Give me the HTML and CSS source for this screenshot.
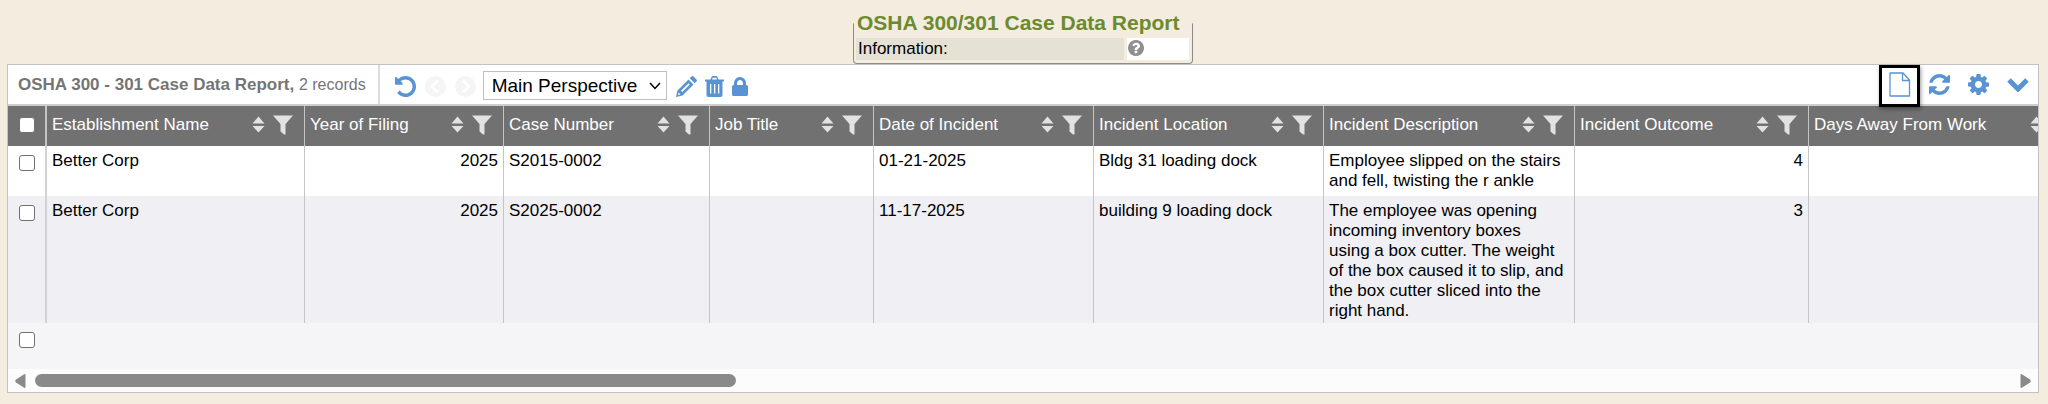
FILE: index.html
```
<!DOCTYPE html>
<html lang="en">
<head>
<meta charset="utf-8">
<title>OSHA 300/301 Case Data Report</title>
<link rel="stylesheet" href="styles.css">
</head>
<body>
<svg class="sprite" aria-hidden="true">
  <symbol id="sort" viewBox="0 0 13 18"><path d="M0.500 7.500 6.500 0.500l6 7zM0.500 10h12l-6 6.500z"/></symbol>
  <symbol id="filter" viewBox="0 0 20 20"><path d="M0 0.500h20L12.500 9v10.500h-1.500L7.500 16.500V9z"/></symbol>
  <symbol id="undo" viewBox="128 128 1536 1536"><path d="M1664 896q0 156-61 298t-164 245-245 164-298 61q-172 0-327-72.500t-264-204.500q-7-10-6.500-22.500t8.500-20.500l137-138q10-9 25-9 16 2 23 12 73 95 179 147t225 52q104 0 198.500-40.500t163.500-109.500 109.500-163.500 40.500-198.500-40.500-198.500-109.500-163.500-163.500-109.500-198.500-40.500q-98 0-188 35.500t-160 101.500l137 138q31 30 14 69-17 40-59 40h-448q-26 0-45-19t-19-45v-448q0-42 40-59 39-17 69 14l130 129q107-101 244.500-156.500t284.500-55.500q156 0 298 61t245 164 164 245 61 298z"/></symbol>
  <symbol id="prev" viewBox="0 0 21 21"><circle cx="10.500" cy="10.500" r="10.500"/><path d="M13 4.500 7 10.500l6 6" fill="none" stroke="#fff" stroke-width="3"/></symbol>
  <symbol id="next" viewBox="0 0 21 21"><circle cx="10.500" cy="10.500" r="10.500"/><path d="m8 4.500 6 6-6 6" fill="none" stroke="#fff" stroke-width="3"/></symbol>
  <symbol id="pencil" viewBox="0 0 21 21"><path fill-rule="evenodd" d="M12.500 3.500 17.500 8.500 6.500 19.500 0 21 1.300 14.700zM5 14.800l1.200 1.200 7.600-7.600-1.200-1.200zM2.500 16.500l-.5 2.500 2.500-.5zM13.700 2.300l1.700-1.700q1.100-1.100 2.200 0l2.800 2.800q1.100 1.100 0 2.200l-1.700 1.700z"/></symbol>
  <symbol id="trash" viewBox="0 0 19 21"><path fill-rule="evenodd" d="M0 3.500h5.500l1-2.500q.4-1 1.500-1h3q1.100 0 1.500 1l1 2.500H19V5.500h-1.500V19q0 2-2 2h-12q-2 0-2-2V5.500H0zM7 3.500h5l-.7-1.800H7.700zM5 8v9.500h1.300V8zm4 0v9.500h1.300V8zm4 0v9.500h1.300V8z"/></symbol>
  <symbol id="lock" viewBox="0 0 16 19"><path fill-rule="evenodd" d="M2 8V6q0-2.500 1.800-4.300T8 0t4.200 1.700T14 6v2h.5Q16 8 16 9.500v8q0 1.500-1.500 1.500h-13Q0 19 0 17.500v-8Q0 8 1.500 8zM5 8h6V6q0-1.200-.9-2.100T8 3t-2.100.9T5 6z"/></symbol>
  <symbol id="page" viewBox="0 0 22 25"><path fill="none" stroke="currentColor" stroke-width="1.300" stroke-linejoin="round" d="M1 1h13l6.500 7v16H1zM13.500 1v7.500h7"/></symbol>
  <symbol id="refresh" viewBox="128 128 1536 1536"><path d="M1639 1056q0 5-1 7-64 268-268 434.500t-478 166.500q-146 0-282.500-55t-243.500-157l-129 129q-19 19-45 19t-45-19-19-45v-448q0-26 19-45t45-19h448q26 0 45 19t19 45-19 45l-137 137q71 66 161 102t187 36q134 0 250-65t186-179q11-17 53-117 8-23 30-23h192q13 0 22.500 9.500t9.500 22.500zm25-800v448q0 26-19 45t-45 19h-448q-26 0-45-19t-19-45 19-45l138-138q-148-137-349-137-134 0-250 65t-186 179q-11 17-53 117-8 23-30 23h-199q-13 0-22.500-9.500t-9.500-22.500v-7q65-268 270-434.500t480-166.500q146 0 284 55.500t245 156.500l130-129q19-19 45-19t45 19 19 45z"/></symbol>
  <symbol id="gear" viewBox="128 128 1536 1536"><path d="M1152 896q0-106-75-181t-181-75-181 75-75 181 75 181 181 75 181-75 75-181zm512-109v222q0 12-8 23t-20 13l-185 28q-19 54-39 91 35 50 107 138 10 12 10 25t-9 23q-27 37-99 108t-94 71q-12 0-26-9l-138-108q-44 23-91 38-16 136-29 186-7 28-36 28h-222q-14 0-24.500-8.500t-11.500-21.500l-28-184q-49-16-90-37l-141 107q-10 9-25 9-14 0-25-11-126-114-165-168-7-10-7-23 0-12 8-23 15-21 51-66.500t54-70.500q-27-50-41-99l-183-27q-13-2-21-12.500t-8-23.500v-222q0-12 8-23t19-13l186-28q14-46 39-92-40-57-107-138-10-12-10-24 0-10 9-23 26-36 98.500-107.500t94.500-71.500q13 0 26 10l138 107q44-23 91-38 16-136 29-186 7-28 36-28h222q14 0 24.500 8.500t11.500 21.500l28 184q49 16 90 37l142-107q9-9 24-9 13 0 25 10 129 119 165 170 7 8 7 22 0 12-8 23-15 21-51 66.500t-54 70.500q26 50 41 98l183 28q13 2 21 12.500t8 23.500z"/></symbol>
  <symbol id="down" viewBox="0 0 22 15"><path d="m2 3 9 9 9-9" fill="none" stroke="currentColor" stroke-width="5"/></symbol>
  <symbol id="caret" viewBox="0 0 12 8"><path d="m1 1 5 5.500L11 1" fill="none" stroke="currentColor" stroke-width="1.500"/></symbol>
  <symbol id="help" viewBox="128 128 1536 1536"><path d="M1024 1376v-192q0-14-9-23t-23-9h-192q-14 0-23 9t-9 23v192q0 14 9 23t23 9h192q14 0 23-9t9-23zm256-672q0-88-55.500-163t-138.500-116-170-41q-243 0-371 213-15 24 8 42l132 100q7 6 19 6 16 0 25-12 53-68 86-92 34-24 86-24 48 0 85.500 26t37.500 59q0 38-20 61t-68 45q-63 28-115.500 86.500t-52.500 125.500v36q0 14 9 23t23 9h192q14 0 23-9t9-23q0-19 21.500-49.500t54.500-49.500q32-18 49-28.500t46-35 44.500-48 28-60.500 12.500-81zm384 192q0 209-103 385.500t-279.500 279.500-385.500 103-385.500-103-279.500-279.500-103-385.500 103-385.500 279.500-279.500 385.500-103 385.500 103 279.500 279.500 103 385.500z"/></symbol>
  <symbol id="left" viewBox="0 0 11 14"><path d="M10.500 1v12q0 1-1 1L1 8.500q-1.500-1.500 0-3L9.500 0q1 0 1 1z"/></symbol>
  <symbol id="right" viewBox="0 0 11 14"><path d="M0.500 1v12q0 1 1 1L10 8.500q1.500-1.500 0-3L1.500 0q-1 0-1 1z"/></symbol>
</svg>

<fieldset class="info">
  <legend class="info-title">OSHA 300/301 Case Data Report</legend>
  <div class="info-row">
    <span class="info-label">Information:</span>
    <span class="info-value"><button class="icon-btn help" aria-label="Help"><svg class="i16"><use href="#help"/></svg></button></span>
  </div>
</fieldset>

<main class="panel">
  <div class="toolbar">
    <div class="toolbar-title"><strong>OSHA 300 - 301 Case Data Report,</strong> <span class="count">2 records</span></div>
    <div class="nav">
      <button class="icon-btn" aria-label="Undo"><svg class="i21"><use href="#undo"/></svg></button>
      <button class="icon-btn off" aria-label="Previous" disabled><svg class="i21"><use href="#prev"/></svg></button>
      <button class="icon-btn off" aria-label="Next" disabled><svg class="i21"><use href="#next"/></svg></button>
    </div>
    <div class="perspective">
      <select aria-label="Perspective"><option>Main Perspective</option></select>
      <svg class="caret" aria-hidden="true"><use href="#caret"/></svg>
    </div>
    <div class="edit">
      <button class="icon-btn" aria-label="Edit"><svg class="i21"><use href="#pencil"/></svg></button>
      <button class="icon-btn" aria-label="Delete"><svg class="trash"><use href="#trash"/></svg></button>
      <button class="icon-btn" aria-label="Lock"><svg class="lock"><use href="#lock"/></svg></button>
    </div>
    <div class="actions">
      <button class="icon-btn new" aria-label="New record"><svg class="page"><use href="#page"/></svg></button>
      <button class="icon-btn" aria-label="Refresh"><svg class="i21"><use href="#refresh"/></svg></button>
      <button class="icon-btn" aria-label="Settings"><svg class="i21"><use href="#gear"/></svg></button>
      <button class="icon-btn" aria-label="Collapse"><svg class="down"><use href="#down"/></svg></button>
    </div>
  </div>

  <div class="scroller">
    <table class="grid">
      <colgroup><col class="c-check"><col class="c-name"><col class="c-year"><col class="c-case"><col class="c-job"><col class="c-date"><col class="c-loc"><col class="c-desc"><col class="c-out"><col class="c-days"></colgroup>
      <thead>
        <tr>
          <th class="check"><input type="checkbox" class="box head-box" aria-label="Select all"></th>
          <th><div class="th"><span class="label">Establishment Name</span><button class="col-btn" aria-label="Sort"><svg class="sort"><use href="#sort"/></svg></button><button class="col-btn" aria-label="Filter"><svg class="filter"><use href="#filter"/></svg></button></div></th>
          <th><div class="th"><span class="label">Year of Filing</span><button class="col-btn" aria-label="Sort"><svg class="sort"><use href="#sort"/></svg></button><button class="col-btn" aria-label="Filter"><svg class="filter"><use href="#filter"/></svg></button></div></th>
          <th><div class="th"><span class="label">Case Number</span><button class="col-btn" aria-label="Sort"><svg class="sort"><use href="#sort"/></svg></button><button class="col-btn" aria-label="Filter"><svg class="filter"><use href="#filter"/></svg></button></div></th>
          <th><div class="th"><span class="label">Job Title</span><button class="col-btn" aria-label="Sort"><svg class="sort"><use href="#sort"/></svg></button><button class="col-btn" aria-label="Filter"><svg class="filter"><use href="#filter"/></svg></button></div></th>
          <th><div class="th"><span class="label">Date of Incident</span><button class="col-btn" aria-label="Sort"><svg class="sort"><use href="#sort"/></svg></button><button class="col-btn" aria-label="Filter"><svg class="filter"><use href="#filter"/></svg></button></div></th>
          <th><div class="th"><span class="label">Incident Location</span><button class="col-btn" aria-label="Sort"><svg class="sort"><use href="#sort"/></svg></button><button class="col-btn" aria-label="Filter"><svg class="filter"><use href="#filter"/></svg></button></div></th>
          <th><div class="th"><span class="label">Incident Description</span><button class="col-btn" aria-label="Sort"><svg class="sort"><use href="#sort"/></svg></button><button class="col-btn" aria-label="Filter"><svg class="filter"><use href="#filter"/></svg></button></div></th>
          <th><div class="th"><span class="label">Incident Outcome</span><button class="col-btn" aria-label="Sort"><svg class="sort"><use href="#sort"/></svg></button><button class="col-btn" aria-label="Filter"><svg class="filter"><use href="#filter"/></svg></button></div></th>
          <th><div class="th"><span class="label">Days Away From Work</span><button class="col-btn" aria-label="Sort"><svg class="sort"><use href="#sort"/></svg></button><button class="col-btn" aria-label="Filter"><svg class="filter"><use href="#filter"/></svg></button></div></th>
        </tr>
      </thead>
      <tbody>
        <tr>
          <td class="check"><input type="checkbox" class="box" aria-label="Select S2015-0002"></td>
          <td>Better Corp</td><td class="num">2025</td><td>S2015-0002</td><td></td><td>01-21-2025</td><td>Bldg 31 loading dock</td>
          <td class="desc">Employee slipped on the stairs and fell, twisting the r ankle</td><td class="num">4</td><td></td>
        </tr>
        <tr>
          <td class="check"><input type="checkbox" class="box" aria-label="Select S2025-0002"></td>
          <td>Better Corp</td><td class="num">2025</td><td>S2025-0002</td><td></td><td>11-17-2025</td><td>building 9 loading dock</td>
          <td class="desc">The employee was opening incoming inventory boxes<br>using a box cutter. The weight of the box caused it to slip, and the box cutter sliced into the right hand.</td><td class="num">3</td><td></td>
        </tr>
      </tbody>
    </table>
  </div>
  <div class="new-row"><input type="checkbox" class="box" aria-label="Select new row"></div>
  <div class="scrollbar">
    <button class="icon-btn arrow" aria-label="Scroll left"><svg class="tri"><use href="#left"/></svg></button>
    <div class="track"><div class="thumb"></div></div>
    <button class="icon-btn arrow" aria-label="Scroll right"><svg class="tri"><use href="#right"/></svg></button>
  </div>
</main>
</body>
</html>
```
FILE: styles.css
```
* { box-sizing: border-box; }

body {
  margin: 0;
  padding: 11px 9px 0 7px;
  background: #f3ecdf;
  color: #000;
  font: 17px/20px "Liberation Sans", Arial, sans-serif;
}

svg { display: block; fill: currentColor; }
.sprite { position: absolute; width: 0; height: 0; }

.i21 { width: 21px; height: 21px; }
.i16 { width: 16px; height: 16px; }
.trash { width: 19px; height: 21px; }
.lock { width: 16px; height: 19px; }
.page { width: 22px; height: 25px; }
.down { width: 22px; height: 15px; }
.sort { width: 13px; height: 18px; }
.filter { width: 20px; height: 20px; }
.tri { width: 11px; height: 14px; }

.icon-btn, .col-btn {
  display: block;
  margin: 0;
  padding: 0;
  border: 0;
  background: none;
  color: #5893d4;
}

/* Report heading */
.info {
  width: 340px;
  margin: 0 auto;
  padding: 3px 3px 3px 2px;
  border: 1px solid #8c8c8c;
  border-top-color: transparent;
  border-radius: 0 0 4px 4px;
}
.info-title {
  padding: 0 1px;
  color: #6c8a2f;
  font-size: 21px;
  line-height: 24px;
  font-weight: bold;
}
.info-row { display: flex; gap: 3px; }
.info-label { flex: 1; padding: 1px 2px; background: #e5e1d5; }
.info-value { width: 62px; padding: 2px 1px; background: #fff; }
.help { color: #8f8f8f; }

/* Grid panel */
.panel { border: 1px solid #c1c3c4; background: #fff; }

.toolbar {
  display: flex;
  align-items: stretch;
  height: 41px;
  border-bottom: 2px solid #cdcfcf;
}
.toolbar-title {
  padding: 10px 12px 9px 10px;
  border-right: 2px solid #dcdcdc;
  color: #757575;
}
.count { font-size: 16px; }
.nav, .edit, .actions { display: flex; align-items: center; }
.nav { gap: 9px; padding: 4px 0 0 15px; }
.off { color: #f5f5f5; }

.perspective {
  display: grid;
  align-items: center;
  align-self: center;
  width: 184px;
  height: 29px;
  margin: 2px 9px 0 7px;
}
.perspective select {
  grid-area: 1 / 1;
  appearance: none;
  width: 100%;
  height: 100%;
  padding: 0 8px;
  border: 1px solid #bdbfc1;
  border-radius: 0;
  background: #fff;
  color: #000;
  font: 19px "Liberation Sans", Arial, sans-serif;
}
.caret {
  grid-area: 1 / 1;
  justify-self: end;
  width: 12px;
  height: 8px;
  margin-right: 6px;
  pointer-events: none;
}

.edit { gap: 8px; padding-top: 4px; }
.actions { gap: 18px; margin-left: auto; padding-right: 9px; }
.new {
  position: relative;
  z-index: 1;
  align-self: flex-start;
  width: 41px;
  height: 42px;
  margin-right: -9px;
  padding: 4px 7px 7px;
  border: 3px solid #000;
  box-shadow: 1px 2px 4px rgba(0, 0, 0, .4);
}

.scroller { overflow: hidden; }
.grid {
  width: 2075px;
  border-collapse: separate;
  border-spacing: 0;
  table-layout: fixed;
}
.c-check { width: 39px; }
.c-name { width: 258px; }
.c-year { width: 199px; }
.c-case { width: 206px; }
.c-job { width: 164px; }
.c-date { width: 220px; }
.c-loc { width: 230px; }
.c-desc { width: 251px; }
.c-out { width: 234px; }
.c-days { width: 274px; }

th, td { border-right: 1px solid #c5c5c8; text-align: left; vertical-align: top; }
th {
  height: 40px;
  padding: 0;
  background: #717171;
  color: #fff;
  font-weight: normal;
}
tbody tr { height: 50px; }
tbody tr:nth-child(even) { background: #efeff4; }
td { padding: 5px 5px 2px; }
.num { text-align: right; }
.th { display: flex; align-items: center; height: 38px; padding: 0 11px 0 5px; }
.label { flex: 1; white-space: nowrap; }
.col-btn { margin-left: 8px; color: #e2e2e2; }

.box {
  appearance: none;
  display: block;
  width: 16px;
  height: 16px;
  margin: 0;
  border: 1px solid #6f6f6f;
  border-radius: 3px;
  background: #fff;
}
td.check { padding: 9px 11px; border-right: 2px solid #d2d2d4; }
th.check { padding: 11px; border-right: 2px solid #c5c5c8; }
.head-box { border-color: #717171; }

.new-row { padding: 9px 11px 21px; background: #f5f5f8; }

.scrollbar {
  display: flex;
  align-items: center;
  gap: 9px;
  height: 23px;
  padding: 0 7px;
  background: #fcfcfc;
}
.arrow { color: #8a8a8a; }
.track { flex: 1; }
.thumb { width: 35.5%; height: 13px; border-radius: 7px; background: #8a8a8a; }
```
